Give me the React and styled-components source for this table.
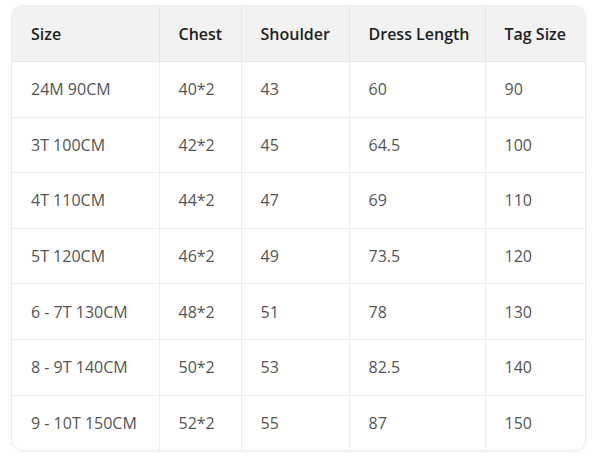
import styled, { createGlobalStyle } from 'styled-components'

const GlobalStyle = createGlobalStyle`
  html, body {
    margin: 0;
    padding: 0;
    background: #fff;
  }
  body {
    font-family: 'Open Sans', 'Noto Sans', sans-serif;
  }
`

const COLS = [147, 82, 108, 136, 100];

const HEAD = ['Size', 'Chest', 'Shoulder', 'Dress Length', 'Tag Size'];

const ROWS = [
  ['24M 90CM', '40*2', '43', '60', '90'],
  ['3T 100CM', '42*2', '45', '64.5', '100'],
  ['4T 110CM', '44*2', '47', '69', '110'],
  ['5T 120CM', '46*2', '49', '73.5', '120'],
  ['6 - 7T 130CM', '48*2', '51', '78', '130'],
  ['8 - 9T 140CM', '50*2', '53', '82.5', '140'],
  ['9 - 10T 150CM', '52*2', '55', '87', '150'],
];

const Page = styled.div`
  padding: 5px 14px 9px 11px;
`

const Card = styled.div`
  width: 575px;
  border-radius: 12px;
  overflow: hidden;
  border: 1px solid #ececec;
  box-shadow: 0 1px 3px rgba(0, 0, 0, 0.05);
  box-sizing: border-box;
`

const Table = styled.table`
  width: 100%;
  border-collapse: collapse;
  table-layout: fixed;
`

const HeadCell = styled.th`
  height: 55px;
  padding: 0 0 0 19px;
  text-align: left;
  background: #f2f2f2;
  color: #1f1f1f;
  font-size: 16px;
  font-weight: 600;
  border-left: 1px solid #e6e6e6;
  border-bottom: 1px solid #e6e6e6;
  &:first-child {
    border-left: none;
  }
`

const Cell = styled.td`
  height: 54.6px;
  padding: 0 0 0 19px;
  color: #555;
  font-size: 16px;
  border-left: 1px solid #ededed;
  border-top: 1px solid #ededed;
  &:first-child {
    border-left: none;
  }
`

const BodyRow = styled.tr`
  &:first-child td {
    border-top: none;
  }
`

export default function App() {
  return (
    <Page>
      <GlobalStyle />
      <Card>
        <Table>
          <colgroup>
            {COLS.map((w, i) => <col key={i} style={{ width: w }} />)}
          </colgroup>
          <thead>
            <tr>
              {HEAD.map((h) => <HeadCell key={h}>{h}</HeadCell>)}
            </tr>
          </thead>
          <tbody>
            {ROWS.map((r) => (
              <BodyRow key={r[0]}>
                {r.map((c, i) => <Cell key={i}>{c}</Cell>)}
              </BodyRow>
            ))}
          </tbody>
        </Table>
      </Card>
    </Page>
  );
}
